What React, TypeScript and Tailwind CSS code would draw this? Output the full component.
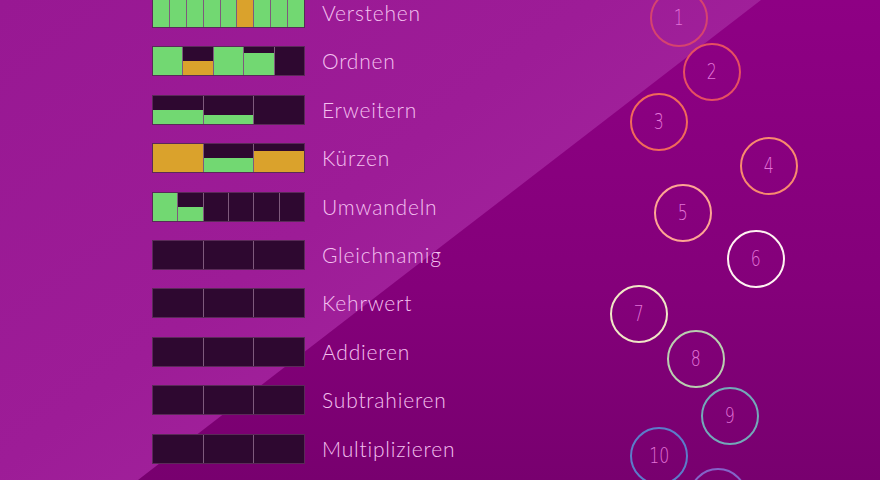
type Cell = { fill: number; color?: 'g' | 'o' };

const GREEN = '#72d872';
const ORANGE = '#daa22c';

const SKILLS: { label: string; cells: Cell[] }[] = [
  {
    label: 'Verstehen',
    cells: [
      { fill: 1, color: 'g' }, { fill: 1, color: 'g' }, { fill: 1, color: 'g' },
      { fill: 1, color: 'g' }, { fill: 1, color: 'g' }, { fill: 1, color: 'o' },
      { fill: 1, color: 'g' }, { fill: 1, color: 'g' }, { fill: 1, color: 'g' },
    ],
  },
  {
    label: 'Ordnen',
    cells: [
      { fill: 1, color: 'g' }, { fill: 0.5, color: 'o' }, { fill: 1, color: 'g' },
      { fill: 0.8, color: 'g' }, { fill: 0 },
    ],
  },
  { label: 'Erweitern', cells: [{ fill: 0.5, color: 'g' }, { fill: 0.33, color: 'g' }, { fill: 0 }] },
  { label: 'Kürzen', cells: [{ fill: 1, color: 'o' }, { fill: 0.5, color: 'g' }, { fill: 0.76, color: 'o' }] },
  {
    label: 'Umwandeln',
    cells: [{ fill: 1, color: 'g' }, { fill: 0.5, color: 'g' }, { fill: 0 }, { fill: 0 }, { fill: 0 }, { fill: 0 }],
  },
  { label: 'Gleichnamig', cells: [{ fill: 0 }, { fill: 0 }, { fill: 0 }] },
  { label: 'Kehrwert', cells: [{ fill: 0 }, { fill: 0 }, { fill: 0 }] },
  { label: 'Addieren', cells: [{ fill: 0 }, { fill: 0 }, { fill: 0 }] },
  { label: 'Subtrahieren', cells: [{ fill: 0 }, { fill: 0 }, { fill: 0 }] },
  { label: 'Multiplizieren', cells: [{ fill: 0 }, { fill: 0 }, { fill: 0 }] },
];

// level bubbles on the right, centre coordinates (11 sits below the fold, number hidden)
const LEVELS = [
  { n: 1, x: 679, y: 18, ring: '#d6436f' },
  { n: 2, x: 712, y: 72, ring: '#e64f62' },
  { n: 3, x: 659, y: 122, ring: '#f2695a' },
  { n: 4, x: 769, y: 166, ring: '#f98a6e' },
  { n: 5, x: 683, y: 213, ring: '#ffa593' },
  { n: 6, x: 756, y: 259, ring: '#fff2f2' },
  { n: 7, x: 639, y: 314, ring: '#f1e7c6' },
  { n: 8, x: 696, y: 359, ring: '#b9cfb0' },
  { n: 9, x: 730, y: 416, ring: '#73a9b9' },
  { n: 10, x: 659, y: 456, ring: '#5b7cca' },
  { n: 11, x: 718, y: 497, ring: '#8463c9', hidden: true },
];

function SkillBar({ cells }: { cells: Cell[] }) {
  return (
    <div className="flex w-[153px] h-[30px] border border-[#5a2a58] bg-[#2e0830]">
      {cells.map((c, i) => (
        <div
          key={i}
          className={`flex-1 flex flex-col justify-end ${i > 0 ? 'border-l border-[#7e5a7c]' : ''}`}
        >
          {c.fill > 0 && (
            <div
              style={{
                height: `${c.fill * 100}%`,
                backgroundColor: c.color === 'o' ? ORANGE : GREEN,
              }}
            />
          )}
        </div>
      ))}
    </div>
  );
}

export default function App() {
  return (
    <div className="relative w-[880px] h-[480px] overflow-hidden bg-[linear-gradient(180deg,#8e0084_0%,#84007a_60%,#78006f_100%)] font-['Lato','Open_Sans',sans-serif]">
      {/* lighter diagonal panel in the top-left */}
      <div className="absolute inset-0 [clip-path:polygon(0_0,761px_0,138px_480px,0_480px)] bg-[linear-gradient(142deg,#981893_0%,#9d1c97_40%,#a5279f_75%,#8c1486_100%)]" />

      <div className="relative flex flex-col gap-[18.4px] pl-[152px] mt-[-2px]">
        {SKILLS.map((s) => (
          <div key={s.label} className="flex items-center gap-[17px] h-[30px]">
            <SkillBar cells={s.cells} />
            <span className="text-[21px] font-light text-[#f4c0f0] leading-none tracking-[0.8px] -mt-[1px]">
              {s.label}
            </span>
          </div>
        ))}
      </div>

      {LEVELS.map((l) => (
        <div
          key={l.n}
          className="absolute w-[58px] h-[58px] -translate-x-1/2 -translate-y-1/2 rounded-full border-2 flex items-center justify-center"
          style={{ left: l.x, top: l.y, borderColor: l.ring }}
        >
          {!l.hidden && (
            <span className="text-[21px] font-extralight text-[#e274d8] font-['DejaVu_Sans',sans-serif] scale-x-75 leading-none">
              {l.n}
            </span>
          )}
        </div>
      ))}
    </div>
  );
}
